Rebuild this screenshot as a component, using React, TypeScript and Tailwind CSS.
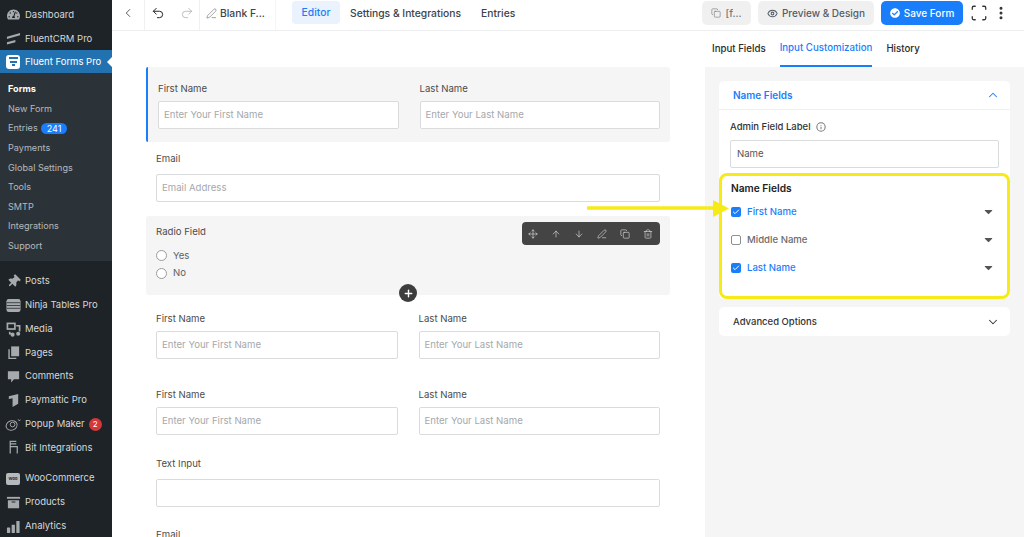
import React from 'react';
import { ChevronLeft, ChevronUp, ChevronDown, Undo2, Redo2, PenLine, Copy, Eye, Scan, EllipsisVertical, Info, Check, Move, ArrowUp, ArrowDown, Trash2, Plus } from 'lucide-react';
import { FaTachometerAlt, FaThumbtack, FaCheckCircle, FaCaretDown } from 'react-icons/fa';

const font = "font-['Inter',sans-serif]";

const Bars = () => (
  <svg viewBox="0 0 16 16" className="w-[15px] h-[15px]" fill="currentColor">
    <rect x="1" y="9" width="3.5" height="6" rx="0.5" />
    <rect x="6" y="6" width="3.5" height="9" rx="0.5" />
    <rect x="11" y="2" width="3.5" height="13" rx="0.5" />
  </svg>
);
const CrmIcon = () => (
  <svg viewBox="0 0 16 16" className="w-[15px] h-[15px]" fill="currentColor">
    <path d="M1 6 15 2v2.5L1 8.500z" />
    <path d="M1 12 10 9.500V12l-9 2.500z" />
  </svg>
);
const FormsIcon = () => (
  <span className="w-[14px] h-[14px] rounded-[3px] bg-white flex flex-col items-center justify-center gap-[1.500px]">
    <span className="w-[9px] h-[2px] bg-[#2271b1]" />
    <span className="w-[7px] h-[2px] bg-[#2271b1]" />
    <span className="w-[3px] h-[2px] bg-[#2271b1]" />
  </span>
);
const TableIcon = () => (
  <svg viewBox="0 0 16 16" className="w-[15px] h-[15px]" fill="currentColor">
    <rect x="0.500" y="1" width="15" height="14" rx="2.500" />
    <path d="M1 5h14M1 8h14M1 11h14" stroke="#1e2327" strokeWidth="0.8" />
  </svg>
);
const MediaIcon = () => (
  <svg viewBox="0 0 16 16" className="w-[15px] h-[15px]" fill="none" stroke="currentColor" strokeWidth="1.800">
    <rect x="1.500" y="1.500" width="8" height="6" />
    <path d="M11 4h3.500v6M4 10.500v2h3" />
    <circle cx="7" cy="13.500" r="1.300" fill="currentColor" />
    <circle cx="13" cy="12.500" r="1.300" fill="currentColor" />
  </svg>
);
const PagesIcon = () => (
  <svg viewBox="0 0 16 16" className="w-[15px] h-[15px]" fill="currentColor">
    <path d="M5.500 1.500H14v10.500H5.500z" />
    <path d="M2.500 4.500H4V13.500h7v1.500H2.500z" />
  </svg>
);
const CommentIcon = () => (
  <svg viewBox="0 0 16 16" className="w-[15px] h-[15px]" fill="currentColor">
    <path d="M2 2.500h12v8.500H8.500L5.500 14.500V11H2z" />
  </svg>
);
const PaymatticIcon = () => (
  <svg viewBox="0 0 16 16" className="w-[15px] h-[15px]" fill="currentColor">
    <path d="M3 3.500 13 1v10.500L7 15V5.500L3 6.500z" />
  </svg>
);
const PopupIcon = () => (
  <svg viewBox="0 0 18 16" className="w-[17px] h-[15px]" fill="none" stroke="currentColor" strokeWidth="1">
    <ellipse cx="7" cy="9" rx="6" ry="5" transform="rotate(-20 7 9)" />
    <circle cx="8" cy="8" r="2.500" />
    <path d="M14 2.500l1 1.500 1.500-1" />
  </svg>
);
const BitIcon = () => (
  <svg viewBox="0 0 16 16" className="w-[15px] h-[15px]" fill="none" stroke="currentColor" strokeWidth="1.300">
    <path d="M11 1.500H4.500v5.500H11M4.500 7v7.500M8 7h4v7.500M4.500 4.200H11" />
  </svg>
);
const WooIcon = () => (
  <span className="w-[14px] h-[12px] rounded-[2px] bg-[#b4b9be] text-[4px] font-bold text-[#1e2327] flex items-center justify-center leading-none">Woo</span>
);
const ArchiveIcon = () => (
  <svg viewBox="0 0 16 16" className="w-[15px] h-[15px]" fill="currentColor">
    <rect x="1" y="2" width="14" height="2" />
    <path d="M2 5.500h12V14H2zM6 7v1h4V7z" fillRule="evenodd" />
  </svg>
);

const SideItem = ({ icon, label, children }: { icon: React.ReactNode; label: string; children?: React.ReactNode }) => (
  <div className="h-[24px] pt-[2px] flex items-center text-[9.500px] text-[#d5d8da]">
    <span className="w-[25px] flex justify-center text-[#a7aaad] pl-[1px]">{icon}</span>
    <span>{label}</span>
    {children}
  </div>
);

const subItems = ['New Form', 'Entries', 'Payments', 'Global Settings', 'Tools', 'SMTP', 'Integrations', 'Support'];

const Sidebar = () => (
  <aside className="w-[112px] shrink-0 h-full bg-[#1e2327] flex flex-col pt-[2px]">
    <SideItem icon={<FaTachometerAlt size={13} />} label="Dashboard" />
    <SideItem icon={<CrmIcon />} label="FluentCRM Pro" />
    <div className="relative h-[24px] pt-[1px] bg-[#2271b1] flex items-center text-[9.500px] text-white">
      <span className="w-[25px] flex justify-center pl-[1px]"><FormsIcon /></span>
      <span>Fluent Forms Pro</span>
      <span className="absolute right-0 top-[7px] border-y-[5px] border-y-transparent border-r-[5px] border-r-white" />
    </div>
    <div className="bg-[#2c3338] pt-[6px] pb-[5px] pl-[8px] text-[9.100px] text-[#b4b9be] mb-[8px]">
      <div className="h-[19.600px] flex items-center font-bold text-white">Forms</div>
      {subItems.map((s) => (
        <div key={s} className="h-[19.600px] flex items-center">
          {s}
          {s === 'Entries' && (
            <span className="ml-[3px] h-[11px] px-[6px] rounded-full bg-[#1a7efb] text-white text-[9px] flex items-center">241</span>
          )}
        </div>
      ))}
    </div>
    <SideItem icon={<FaThumbtack size={13} className="rotate-45" />} label="Posts" />
    <SideItem icon={<TableIcon />} label="Ninja Tables Pro" />
    <SideItem icon={<MediaIcon />} label="Media" />
    <SideItem icon={<PagesIcon />} label="Pages" />
    <SideItem icon={<CommentIcon />} label="Comments" />
    <SideItem icon={<PaymatticIcon />} label="Paymattic Pro" />
    <SideItem icon={<PopupIcon />} label="Popup Maker">
      <span className="ml-[4px] w-[13px] h-[13px] rounded-full bg-[#d63638] text-white text-[8px] flex items-center justify-center">2</span>
    </SideItem>
    <SideItem icon={<BitIcon />} label="Bit Integrations" />
    <div className="h-[7px]" />
    <SideItem icon={<WooIcon />} label="WooCommerce" />
    <SideItem icon={<ArchiveIcon />} label="Products" />
    <SideItem icon={<Bars />} label="Analytics" />
  </aside>
);

const Header = () => (
  <header className="h-[31px] shrink-0 bg-white border-b border-[#eceef0] flex items-center text-[#3c434a]">
    <div className="w-[33px] h-full pb-[4px] flex items-center justify-center border-r border-[#f0f0f0]">
      <ChevronLeft size={14} strokeWidth={1.500} className="text-[#444]" />
    </div>
    <div className="w-[55px] h-full pb-[4px] flex items-center gap-[15px] pl-[6px] border-r border-[#f0f0f0]">
      <Undo2 size={14} strokeWidth={1.700} className="text-[#222]" />
      <Redo2 size={14} strokeWidth={1.300} className="text-[#aaa]" />
    </div>
    <div className="w-[76px] h-full pb-[3px] flex items-center pl-[6px] gap-[3px] border-r border-[#f5f5f5] text-[10.300px] font-medium">
      <PenLine size={11} strokeWidth={1.300} className="text-[#666]" />
      <span>Blank F...</span>
    </div>
    <div className="ml-[16px] h-[23px] w-[48px] mb-[5px] rounded-[4px] bg-[#e9f2fd] text-[#1a7efb] text-[10.300px] font-medium flex items-center justify-center">Editor</div>
    <span className="ml-[10px] mb-[3px] text-[10.300px] font-medium">Settings &amp; Integrations</span>
    <span className="ml-[20px] mb-[3px] text-[10.300px] font-medium">Entries</span>
    <div className="ml-auto flex items-center mb-[5px] text-[10px] font-medium">
      <div className="w-[49px] h-[24px] pt-[1px] rounded-[5px] bg-[#f0f0f1] text-[#72777c] flex items-center justify-center gap-[4px]">
        <Copy size={10} strokeWidth={1.500} /><span>[f...</span>
      </div>
      <div className="ml-[7px] w-[116px] h-[24px] pt-[1px] rounded-[5px] bg-[#f0f0f1] text-[#555d66] flex items-center justify-center gap-[4px]">
        <Eye size={11} strokeWidth={2.200} /><span>Preview &amp; Design</span>
      </div>
      <div className="ml-[7px] w-[82px] h-[24px] pt-[1px] rounded-[5px] bg-[#1a7efb] text-white flex items-center justify-center gap-[4px]">
        <FaCheckCircle size={10} /><span>Save Form</span>
      </div>
      <Scan size={18} strokeWidth={1.700} className="ml-[7px] text-[#333]" />
      <EllipsisVertical size={16} strokeWidth={2.500} className="ml-[5px] mr-[15px] text-[#333]" />
    </div>
  </header>
);

const Field = ({ label, placeholder, wide }: { label: string; placeholder?: string; wide?: boolean }) => (
  <div className="flex-1 min-w-0">
    <div className={`h-[13px] pt-[2px] flex items-center text-[9.600px] text-[#4b4c4d] ${wide ? 'mb-[9px]' : 'mb-[6px]'}`}>{label}</div>
    <div className="h-[28px] bg-white border border-[#dadbdd] rounded-[2px] flex items-center px-[5px] text-[9.600px] text-[#a5a8ab]">{placeholder}</div>
  </div>
);

const Toolbar = () => (
  <div className="absolute right-[10px] top-[6px] w-[138px] h-[23px] rounded-[4px] bg-[#444] text-[#ddd] flex items-center gap-[13px] pl-[6px]">
    <Move size={10} strokeWidth={1.500} />
    <ArrowUp size={10} strokeWidth={1.500} />
    <ArrowDown size={10} strokeWidth={1.500} />
    <PenLine size={10} strokeWidth={1.500} />
    <Copy size={10} strokeWidth={1.500} />
    <Trash2 size={10} strokeWidth={1.500} />
  </div>
);

const Radio = ({ label }: { label: string }) => (
  <div className="h-[17.500px] flex items-center gap-[6px] text-[9.600px] text-[#606266]">
    <span className="w-[11px] h-[11px] rounded-full border border-[#9a9a9a] bg-white" />
    {label}
  </div>
);

const FormArea = () => (
  <main className="w-[593px] shrink-0 bg-white overflow-hidden pt-[36px] pl-[34px] pr-[35px]">
    <div className="h-[75px] bg-[#f5f5f5] border-l-2 border-[#1a7efb] rounded-l-[2px] rounded-r-[3px] flex gap-[21px] pl-[10px] pr-[10px] pt-[15px]">
      <Field label="First Name" placeholder="Enter Your First Name" />
      <Field label="Last Name" placeholder="Enter Your Last Name" />
    </div>
    <div className="mt-[10px] px-[10px]">
      <Field wide label="Email" placeholder="Email Address" />
    </div>
    <div className="relative mt-[14px] h-[79px] bg-[#f5f5f5] rounded-[3px] px-[10px] pt-[9px]">
      <div className="h-[13px] pt-[2px] flex items-center text-[9.600px] text-[#4b4c4d] mb-[9px]">Radio Field</div>
      <Radio label="Yes" />
      <Radio label="No" />
      <Toolbar />
      <span className="absolute left-[253px] top-[68px] w-[18px] h-[18px] rounded-full bg-[#3d3d3d] text-white flex items-center justify-center">
        <Plus size={11} strokeWidth={3} />
      </span>
    </div>
    <div className="mt-[17px] flex gap-[21px] px-[10px]">
      <Field label="First Name" placeholder="Enter Your First Name" />
      <Field label="Last Name" placeholder="Enter Your Last Name" />
    </div>
    <div className="mt-[29px] flex gap-[21px] px-[10px]">
      <Field label="First Name" placeholder="Enter Your First Name" />
      <Field label="Last Name" placeholder="Enter Your Last Name" />
    </div>
    <div className="mt-[22px] px-[10px]">
      <Field wide label="Text Input" />
    </div>
    <div className="mt-[21px] px-[10px]">
      <Field wide label="Email" />
    </div>
  </main>
);

const NameOption = ({ label, checked }: { label: string; checked?: boolean }) => (
  <div className="h-[28px] flex items-center">
    {checked ? (
      <span className="w-[10px] h-[10px] rounded-[2px] bg-[#1a7efb] text-white flex items-center justify-center">
        <Check size={8} strokeWidth={3} />
      </span>
    ) : (
      <span className="w-[10px] h-[10px] rounded-[2px] border border-[#8f8f8f] bg-white" />
    )}
    <span className={`ml-[6px] text-[9.600px] font-medium ${checked ? 'text-[#1a7efb]' : 'text-[#6b6b6b]'}`}>{label}</span>
    <FaCaretDown size={13} className="ml-auto mr-[4px] mb-[2px] text-[#555]" />
  </div>
);

const RightPanel = () => (
  <section className="flex-1 min-w-0 bg-[#f5f5f5] relative">
    <div className="h-[36px] bg-white flex items-end pl-[7px] gap-[14px] text-[9.700px] font-medium text-[#2b2b2b]">
      <span className="h-[35px] pb-[1px] flex items-center">Input Fields</span>
      <span className="h-[35px] flex items-center text-[#1a7efb] border-b-2 border-[#1a7efb]">Input Customization</span>
      <span className="h-[35px] pb-[1px] flex items-center">History</span>
    </div>
    <div className="mt-[14px] mx-[14px] rounded-[5px] bg-white">
      <div className="h-[29px] flex items-center justify-between pl-[14px] pr-[10px] border-b border-[#f0f0f1] text-[10px] font-semibold text-[#1a7efb]">
        <span>Name Fields</span>
        <ChevronUp size={14} strokeWidth={1.800} />
      </div>
      <div className="px-[11px] pt-[10px]">
        <div className="flex items-center gap-[5px] text-[9.500px] font-medium text-[#333]">
          Admin Field Label <Info size={10} strokeWidth={2.500} className="text-[#777]" />
        </div>
        <div className="mt-[6px] h-[28px] border border-[#dadbdd] rounded-[2px] flex items-center px-[6px] text-[9.600px] text-[#555]">Name</div>
      </div>
      <div className="mt-[5px] h-[126px] rounded-[8px] border-[3px] border-[#f6eb16] bg-white pl-[9px] pr-[8px] pt-[5px]">
        <div className="text-[10.200px] leading-[14px] font-semibold text-[#222]">Name Fields</div>
        <div className="mt-[3px]">
          <NameOption label="First Name" checked />
          <NameOption label="Middle Name" />
          <NameOption label="Last Name" checked />
        </div>
      </div>
    </div>
    <div className="mt-[8px] mx-[14px] h-[29px] rounded-[5px] bg-white flex items-center justify-between pl-[14px] pr-[10px] text-[9.500px] font-medium text-[#333]">
      <span>Advanced Options</span>
      <ChevronDown size={14} strokeWidth={1.800} />
    </div>
  </section>
);

// annotation arrow that sits over the form and the panel
const Arrow = () => (
  <svg className="absolute left-[587px] top-[199px]" width="143" height="20" viewBox="0 0 143 20">
    <path d="M0 9h128" stroke="#f6eb16" strokeWidth="3.500" />
    <path d="M126 1 142 9.500 126 18z" fill="#f6eb16" />
  </svg>
);

export default function App() {
  return (
    <div className={`relative w-[1024px] h-[537px] overflow-hidden flex bg-white ${font}`}>
      <Sidebar />
      <div className="flex-1 min-w-0 flex flex-col h-full">
        <Header />
        <div className="flex-1 min-h-0 flex">
          <FormArea />
          <RightPanel />
        </div>
      </div>
      <Arrow />
    </div>
  );
}
